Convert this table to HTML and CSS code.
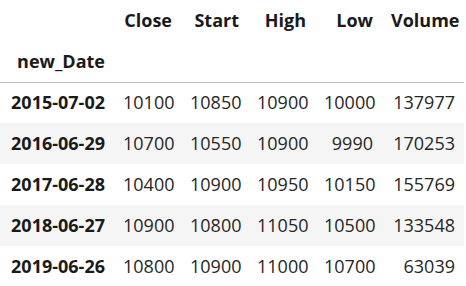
FILE: index.html
```html
<!DOCTYPE html>
<html>
<head>
<meta charset="utf-8">
<link rel="stylesheet" href="styles.css">
</head>
<body>
<table class="df">
  <colgroup>
    <col class="c-idx"><col class="c-num"><col class="c-num"><col class="c-num"><col class="c-num"><col class="c-vol">
  </colgroup>
  <thead>
    <tr><th></th><th>Close</th><th>Start</th><th>High</th><th>Low</th><th>Volume</th></tr>
    <tr class="names"><th>new_Date</th><th></th><th></th><th></th><th></th><th></th></tr>
  </thead>
  <tbody>
    <tr><th>2015-07-02</th><td>10100</td><td>10850</td><td>10900</td><td>10000</td><td>137977</td></tr>
    <tr><th>2016-06-29</th><td>10700</td><td>10550</td><td>10900</td><td>9990</td><td>170253</td></tr>
    <tr><th>2017-06-28</th><td>10400</td><td>10900</td><td>10950</td><td>10150</td><td>155769</td></tr>
    <tr><th>2018-06-27</th><td>10900</td><td>10800</td><td>11050</td><td>10500</td><td>133548</td></tr>
    <tr><th>2019-06-26</th><td>10800</td><td>10900</td><td>11000</td><td>10700</td><td>63039</td></tr>
  </tbody>
</table>
</body>
</html>
```

FILE: styles.css
```css
html, body {
  margin: 0;
  padding: 0;
  background: #ffffff;
}
body {
  font-family: "Open Sans", "Noto Sans", sans-serif;
  color: #212121;
}
.df {
  border-collapse: collapse;
  table-layout: fixed;
  width: 464px;
  font-size: 18px;
}
.c-idx { width: 114px; }
.c-num { width: 67px; }
.c-vol { width: 82px; }
.df th, .df td {
  box-sizing: border-box;
  height: 41px;
  padding: 0 9px;
  line-height: 23px;
  text-align: right;
  vertical-align: middle;
  white-space: nowrap;
}
.df th {
  font-weight: bold;
  color: #1a1a1a;
}
.df td {
  font-weight: normal;
  color: #262626;
}
.df thead tr.names th {
  border-bottom: 1px solid #bdbdbd;
}
.df tbody tr:nth-child(even) {
  background: #f5f5f5;
}
```
